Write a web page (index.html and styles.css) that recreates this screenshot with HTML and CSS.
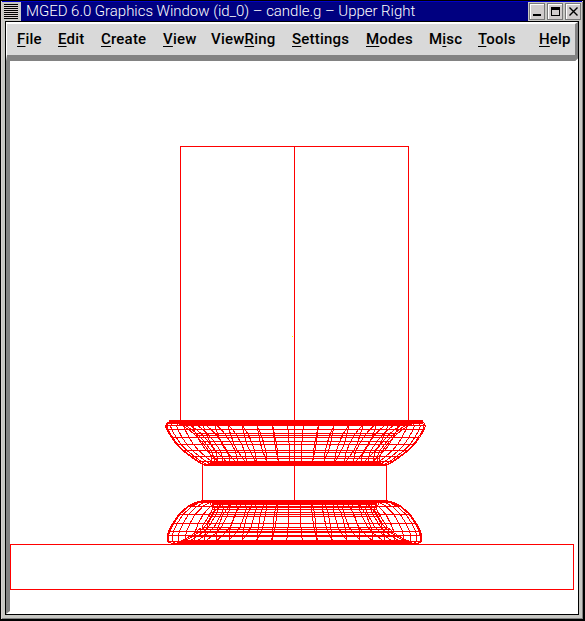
FILE: index.html
```html
<!DOCTYPE html>
<html lang="en">
<head>
<meta charset="utf-8">
<title>MGED 6.0 Graphics Window</title>
<link rel="stylesheet" href="styles.css">
</head>
<body>
<div class="window">
  <header class="titlebar">
    <span class="grip"></span>
    <h1 class="title">MGED 6.0 Graphics Window (id_0) – candle.g – Upper Right</h1>
    <div class="controls">
      <span class="control"><svg width="16" height="16" shape-rendering="crispEdges"><path d="M4 11h8v2H4z"/></svg></span>
      <span class="control"><svg width="16" height="16" shape-rendering="crispEdges"><path d="M4 4h9v9H4zM5 7v5h7V7z" fill-rule="evenodd"/></svg></span>
      <span class="control"><svg width="16" height="16"><path d="M4.5 4.5l8 8m0-8l-8 8" stroke="#000" stroke-width="1.4"/></svg></span>
    </div>
  </header>
  <div class="client">
    <nav class="menubar">
      <span class="item file"><u>F</u>ile</span>
      <span class="item edit"><u>E</u>dit</span>
      <span class="item create"><u>C</u>reate</span>
      <span class="item view"><u>V</u>iew</span>
      <span class="item viewring">View<u>R</u>ing</span>
      <span class="item settings"><u>S</u>ettings</span>
      <span class="item modes"><u>M</u>odes</span>
      <span class="item misc">M<u>i</u>sc</span>
      <span class="item tools"><u>T</u>ools</span>
      <span class="item help"><u>H</u>elp</span>
    </nav>
    <main class="viewport">
      <svg class="scene" width="569" height="554" viewBox="10 61 569 554">
        <g class="wire">
          <path d="M180.500 422V146.500H408.500V422M294.500 146V500M202.500 465V500M386.500 465V500"/>
          <path d="M10.500 544.500H573.500V589.500H10.500z"/>
        </g>
        <g class="wire" id="rings"></g>
        <rect x="292" y="336" width="1" height="1" fill="#ff0"/>
      </svg>
    </main>
  </div>
</div>
<script src="scene.js"></script>
</body>
</html>
```
FILE: styles.css
```css
* { box-sizing: border-box; }
body { margin: 0; background: #000; font-family: Roboto, "Liberation Sans", sans-serif; }
.window {
  width: 585px; height: 621px; background: #c8c8c4;
  border: 1px solid #000; border-right-width: 2px; border-bottom-width: 2px;
  box-shadow: inset 1px 1px #d8d0d0, inset -1px -1px #808080;
  padding: 0 4px 4px; display: flex; flex-direction: column;
}
.titlebar {
  height: 20px; margin: 0 -3px; display: flex; background: #000080;
  border-top: 1px solid #0000c8; flex: none;
}
.grip {
  width: 19px; border: 2px solid #c8c8c4; border-right: 3px solid #ccc;
  background: repeating-linear-gradient(#000 0 1px, #d8d0d0 1px 2px);
}
.title {
  margin: 0 0 0 5px; width: 392px; font-size: 15px; line-height: 18px;
  font-weight: 300; color: #fff; letter-spacing: -.03px; white-space: nowrap;
}
.controls { margin-left: auto; display: flex; gap: 2px; padding: 1px; background: #c8c8c4; }
.control {
  width: 16px; height: 17px; background: #d0cccc;
  box-shadow: inset 1px 1px #777, inset -1px -1px #777, inset 2px 2px #fff;
}
.control svg { display: block; }
.client {
  flex: 1; min-height: 0; border: 1px solid #000; display: flex; flex-direction: column; background: #fff;
}
.menubar {
  height: 39px; flex: none; padding: 0 10px 1px 10px; display: flex; align-items: center;
  background: #d9d9d9; border-top: 2px solid #fff; border-left: 1px solid #fff;
  border-right: 3px solid #828282; border-bottom: 6px solid #828282;
  clip-path: polygon(0 0, 100% 0, 100% calc(100% - 3px), calc(100% - 3px) 100%, 0 100%);
}
.item { font-size: 15px; line-height: 18px; font-weight: 500; letter-spacing: .2px; white-space: nowrap; flex: none; }
.item u { text-decoration-thickness: 1px; text-underline-offset: 2px; text-decoration-skip-ink: none; }
.file { width: 41px; }
.edit { width: 43px; }
.create { width: 62px; }
.view { width: 48px; }
.viewring { width: 81px; }
.settings { width: 74px; }
.modes { width: 63px; }
.misc { width: 49px; }
.tools { width: 61px; }
.viewport {
  flex: 1; min-height: 0; border-left: 4px solid #828282; border-bottom: 3px solid #fff;
  background: #fff; overflow: hidden;
}
.scene { display: block; }
.wire { fill: none; stroke: #f00; stroke-width: 1; shape-rendering: crispEdges; }
```
FILE: scene.js
```js
// Rings are surfaces of revolution: each profile is a list of [y, radius].
const rings = [
  {
    cx: 295.5,
    outer: [[421, 125], [422, 128], [425, 130], [429, 129], [437, 124], [444, 119], [450, 113], [456, 105], [461, 98], [465, 91]],
    inner: [[421, 122], [424, 115], [429, 107], [433, 102], [435, 100], [441, 94], [450, 87], [452, 86], [458, 84], [462, 84], [465, 91]],
    bands: [[420, 423, 127], [461, 465, 85]]
  },
  {
    cx: 294.5,
    outer: [[500, 91], [502, 99], [506, 107], [514, 116], [523, 122], [531, 126], [535, 127], [541, 127], [543, 124]],
    inner: [[500, 91], [502, 85], [507, 82], [509, 82], [512, 84], [516, 86], [527, 93], [529, 96], [532, 99], [536, 105], [541, 114], [543, 118]],
    bands: [[500, 504, 82], [540, 543, 114]]
  }
];

const outerAngles = [10, 17, 24, 31, 38, 45, 52, 59, 66, 74, 82, 90];
const innerAngles = [4, 12, 20, 28, 36, 44, 52, 60, 68, 76, 90];

const group = document.getElementById('rings');
function add(d) {
  const path = document.createElementNS('http://www.w3.org/2000/svg', 'path');
  path.setAttribute('d', d);
  group.appendChild(path);
}

for (const { cx, outer, inner, bands } of rings) {
  for (const [profile, angles] of [[outer, outerAngles], [inner, innerAngles]]) {
    for (const [y, r] of profile) add(`M${cx - r} ${y + 0.5}H${cx + r}`);
    for (const angle of angles) {
      const scale = Math.sin(angle * Math.PI / 180);
      for (const side of [-1, 1]) {
        add('M' + profile.map(([y, r]) => `${(cx + side * r * scale).toFixed(2)} ${y + 0.5}`).join('L'));
      }
    }
  }
  for (const [top, bottom, r] of bands) {
    for (let y = top; y <= bottom; y++) add(`M${cx - r} ${y + 0.5}H${cx + r}`);
  }
}
```
